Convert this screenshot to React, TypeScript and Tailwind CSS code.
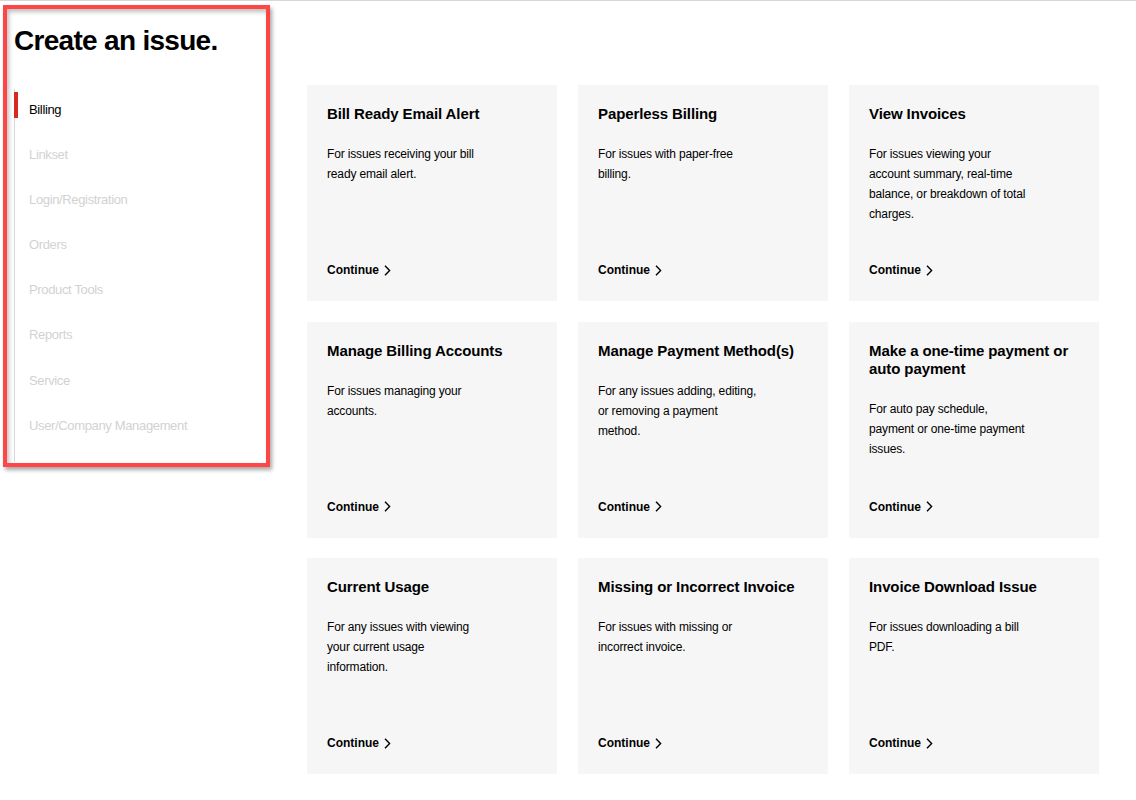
import { Fragment } from 'react';

const navItems = [
  'Billing',
  'Linkset',
  'Login/Registration',
  'Orders',
  'Product Tools',
  'Reports',
  'Service',
  'User/Company Management',
];

const cards = [
  { title: ['Bill Ready Email Alert'], desc: ['For issues receiving your bill', 'ready email alert.'] },
  { title: ['Paperless Billing'], desc: ['For issues with paper-free', 'billing.'] },
  {
    title: ['View Invoices'],
    desc: ['For issues viewing your', 'account summary, real-time', 'balance, or breakdown of total', 'charges.'],
  },
  { title: ['Manage Billing Accounts'], desc: ['For issues managing your', 'accounts.'] },
  {
    title: ['Manage Payment Method(s)'],
    desc: ['For any issues adding, editing,', 'or removing a payment', 'method.'],
  },
  {
    title: ['Make a one-time payment or', 'auto payment'],
    desc: ['For auto pay schedule,', 'payment or one-time payment', 'issues.'],
  },
  {
    title: ['Current Usage'],
    desc: ['For any issues with viewing', 'your current usage', 'information.'],
  },
  { title: ['Missing or Incorrect Invoice'], desc: ['For issues with missing or', 'incorrect invoice.'] },
  { title: ['Invoice Download Issue'], desc: ['For issues downloading a bill', 'PDF.'] },
];

function Lines({ lines }: { lines: string[] }) {
  return (
    <>
      {lines.map((l, i) => (
        <Fragment key={i}>
          {i > 0 && <br />}
          {l}
        </Fragment>
      ))}
    </>
  );
}

function IssueCard({ title, desc }: { title: string[]; desc: string[] }) {
  return (
    <div className="flex h-[216px] w-[250px] flex-col bg-[#f6f6f6] px-5 pt-5 pb-[23px]">
      <h3 className="text-[15px] leading-[18px] font-bold tracking-[-0.1px] text-black">
        <Lines lines={title} />
      </h3>
      <p className="mt-[21px] text-[12px] leading-[20px] tracking-[-0.15px] text-black">
        <Lines lines={desc} />
      </p>
      <a href="#" className="mt-auto flex items-center gap-[5px] text-[12px] leading-4 font-bold text-black">
        Continue
        <svg width="7" height="11" viewBox="0 0 7 11" fill="none">
          <polyline points="1,0.8 5.6,5.5 1,10.2" stroke="#000" strokeWidth="1.4" />
        </svg>
      </a>
    </div>
  );
}

export default function App() {
  return (
    <div className="min-h-[800px] border-t border-[#d8d8d8] bg-white font-['Liberation_Sans',Arial,sans-serif]">
      <div className="flex items-start">
        {/* Sidebar (highlighted) */}
        <div className="mt-[4px] ml-[3px] h-[462px] w-[267px] shrink-0 border-4 border-[#ff4646] bg-white pl-[7px] shadow-[2px_3px_4px_rgba(0,0,0,0.35),inset_2px_3px_4px_rgba(0,0,0,0.25)]">
          <h1 className="mt-[14px] text-[28px] leading-[36px] font-bold tracking-[-0.7px] text-black">
            Create an issue.
          </h1>
          <ul className="mt-[30px] h-[373px] border-l border-[#d8d8d8]">
            {navItems.map((item, i) => (
              <li key={item} className="h-[45.1px] pt-[3px]">
                <div
                  className={`-ml-px h-[26px] border-l-4 pt-[10px] pl-[11px] text-[13px] leading-4 tracking-[-0.35px] ${
                    i === 0 ? 'border-[#d52b1e] text-black' : 'border-transparent text-[#d2d2d2]'
                  }`}
                >
                  {item}
                </div>
              </li>
            ))}
          </ul>
        </div>

        {/* Cards */}
        <div className="mt-[84px] ml-[37px] grid grid-cols-[250px_250px_250px] gap-x-[21px] gap-y-[20.5px]">
          {cards.map((c) => (
            <IssueCard key={c.title[0]} title={c.title} desc={c.desc} />
          ))}
        </div>
      </div>
    </div>
  );
}
